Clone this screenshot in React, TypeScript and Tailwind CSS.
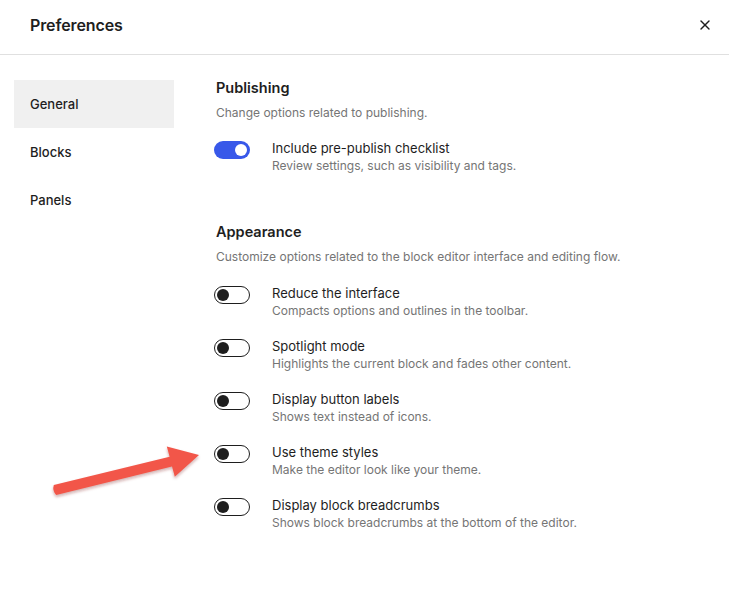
import { X } from 'lucide-react';

const publishing = [
  { label: 'Include pre-publish checklist', help: 'Review settings, such as visibility and tags.', on: true },
];

const appearance = [
  { label: 'Reduce the interface', help: 'Compacts options and outlines in the toolbar.', on: false },
  { label: 'Spotlight mode', help: 'Highlights the current block and fades other content.', on: false },
  { label: 'Display button labels', help: 'Shows text instead of icons.', on: false },
  { label: 'Use theme styles', help: 'Make the editor look like your theme.', on: false },
  { label: 'Display block breadcrumbs', help: 'Shows block breadcrumbs at the bottom of the editor.', on: false },
];

function Toggle({ on }: { on: boolean }) {
  if (on) {
    return (
      <span className="relative mt-[1px] h-[18px] w-[36px] shrink-0 rounded-full bg-[#3858e9]">
        <span className="absolute right-[3px] top-[3px] h-[12px] w-[12px] rounded-full bg-white" />
      </span>
    );
  }
  return (
    <span className="relative mt-[1px] h-[18px] w-[36px] shrink-0 rounded-full border border-[#1e1e1e] bg-white">
      <span className="absolute left-[2px] top-[2px] h-[12px] w-[12px] rounded-full bg-[#1e1e1e]" />
    </span>
  );
}

function Row({ label, help, on }: { label: string; help: string; on: boolean }) {
  return (
    <div className="flex items-start">
      <Toggle on={on} />
      <div className="ml-[22px]">
        <div className="text-[13px] leading-[17px] text-[#1e1e1e]">{label}</div>
        <div className="text-[12px] leading-[17px] text-[#757575]">{help}</div>
      </div>
    </div>
  );
}

export default function App() {
  return (
    <div className="relative h-[595px] w-[729px] overflow-hidden bg-white font-[Inter,sans-serif] text-[#1e1e1e]">
      <div className="flex h-[55px] items-center justify-between border-b border-[#e0e0e0] pb-[4px] pl-[30px] pr-[16px]">
        <h1 className="text-[16px] font-semibold tracking-[-0.1px]">Preferences</h1>
        <X className="h-[16px] w-[16px]" strokeWidth={2} />
      </div>

      <div className="flex">
        <nav className="w-[200px] pl-[14px] pt-[25px]">
          <div className="flex h-[48px] w-[160px] items-center bg-[#f0f0f0] pl-[16px] pt-[1px] text-[13px] font-medium">General</div>
          <div className="flex h-[48px] items-center pl-[16px] pt-[1px] text-[13px] font-medium">Blocks</div>
          <div className="flex h-[48px] items-center pl-[16px] pt-[1px] text-[13px] font-medium">Panels</div>
        </nav>

        <main className="pl-[14px] pt-[23px]">
          <section>
            <h2 className="pl-[2px] text-[14.5px] font-semibold leading-[20px]">Publishing</h2>
            <p className="mt-[6px] pl-[2px] text-[12px] leading-[18px] text-[#757575]">Change options related to publishing.</p>
            <div className="mt-[18px] flex flex-col gap-[19px]">
              {publishing.map((r) => (
                <Row key={r.label} {...r} />
              ))}
            </div>
          </section>

          <section className="mt-[48px]">
            <h2 className="pl-[2px] text-[14.5px] font-semibold leading-[20px]">Appearance</h2>
            <p className="mt-[6px] pl-[2px] text-[12px] leading-[18px] text-[#757575]">
              Customize options related to the block editor interface and editing flow.
            </p>
            <div className="mt-[19px] flex flex-col gap-[19px]">
              {appearance.map((r) => (
                <Row key={r.label} {...r} />
              ))}
            </div>
          </section>
        </main>
      </div>

      {/* annotation arrow */}
      <svg className="pointer-events-none absolute left-0 top-0" width="729" height="595" viewBox="0 0 729 595">
        <defs>
          <filter id="sh" x="-10%" y="-10%" width="120%" height="130%">
            <feDropShadow dx="0" dy="2" stdDeviation="1.5" floodColor="#7a1f16" floodOpacity="0.35" />
          </filter>
        </defs>
        <path
          d="M53.8 485.1 L169.6 456.8 L166.8 446.6 L199 455 L174.8 476.8 L172 466.6 L56.2 494.9 Q52 491 53.8 485.1 Z"
          fill="#f2574a"
          filter="url(#sh)"
        />
      </svg>
    </div>
  );
}
